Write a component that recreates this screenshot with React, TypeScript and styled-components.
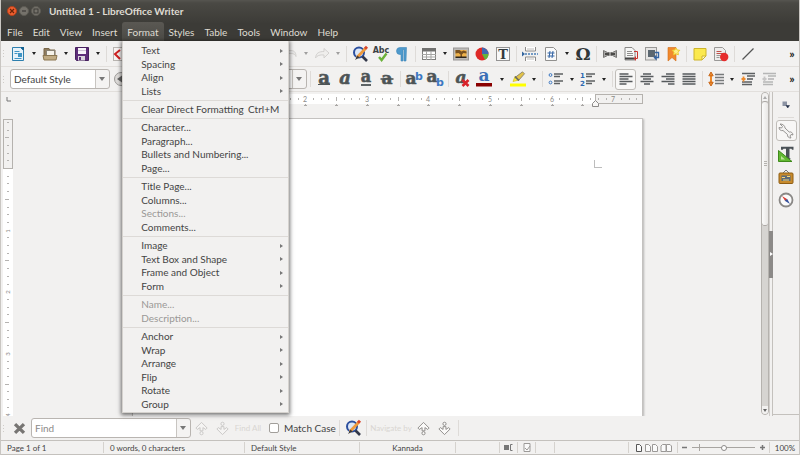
import React from 'react';
import styled, { createGlobalStyle, css } from 'styled-components';
import { Printer, FileSearch, Scissors, Copy, ClipboardPaste, Paintbrush } from 'lucide-react';

const Global = createGlobalStyle`
  * { box-sizing: border-box; }
  html, body { margin: 0; padding: 0; }
  body {
    background: #f2f1f0;
    color: #444;
    font-family: Lato, "Noto Sans", sans-serif;
    font-size: 10px;
    line-height: 14px;
  }
  button, input, select { font: inherit; color: inherit; }
  button { border: 0; padding: 0; margin: 0; background: none; }
  svg { display: block; flex: none; overflow: visible; }
`;

const Window = styled.div`
  display: flex;
  flex-direction: column;
  height: 100vh;
  overflow: hidden;
  background: #f2f1f0;
  border-left: 1px solid #c9c6c2;
  border-right: 1px solid #c9c6c2;
`;

/* ---------- title and menu bar ---------- */

const Chrome = styled.header`
  flex: none;
  margin: 0 -1px;
  color: #dfdbd2;
  background: linear-gradient(#565550 0, #4a4944 3px, #3c3b37 24px);
`;

const TitleBar = styled.div`
  display: flex;
  align-items: center;
  height: 22px;
  padding-left: 7px;
`;

const WindowButtons = styled.div`
  display: flex;
  gap: 2px;
  margin-right: 8px;
`;

const WindowButton = styled.button<{ $close?: boolean }>`
  display: flex;
  align-items: center;
  justify-content: center;
  width: 10px;
  height: 10px;
  border-radius: 50%;
  color: #3c3b37;
  background: ${(p) => (p.$close ? '#ee5f2f' : '#75726b')};
  border: 1px solid ${(p) => (p.$close ? '#b3401b' : '#5d5b54')};
`;

const Title = styled.h1`
  margin: 0;
  font-size: 10px;
  font-weight: 700;
  line-height: 22px;
`;

const MenuBar = styled.nav`
  display: flex;
  height: 19px;
  padding-left: 2px;
`;

const MenuSlot = styled.div`
  position: relative;
`;

const MenuTitle = styled.button<{ $open?: boolean }>`
  height: 19px;
  padding: 0 5px;
  line-height: 18px;
  border-radius: 3px 3px 0 0;
  background: ${(p) => (p.$open ? 'linear-gradient(#5a5853, #4b4a45)' : 'none')};
`;

const Menu = styled.div`
  position: absolute;
  z-index: 10;
  top: 100%;
  left: 0;
  width: 167px;
  padding: 3px 0 1px;
  color: #444;
  background: #f2f1f0;
  border: 1px solid #d5d2ce;
  border-top: 0;
  box-shadow: 0 1px 4px 1px rgba(0, 0, 0, 0.55);
`;

const MenuGroup = styled.div`
  & + & {
    margin-top: 2px;
    padding-top: 2px;
    border-top: 1px solid #dddad7;
  }
`;

const MenuItem = styled.button`
  display: flex;
  align-items: center;
  width: 100%;
  height: 13px;
  padding: 0 5px 0 18px;
  line-height: 13px;
  white-space: nowrap;
  &:nth-child(even) { height: 14px; }
  &:disabled { color: #9a9896; }
`;

const Shortcut = styled.span`
  margin-left: auto;
  padding-right: 4px;
`;

const SubmenuArrow = styled.span`
  width: 0;
  height: 0;
  margin-left: auto;
  border: 2px solid transparent;
  border-left: 3px solid #777;
  border-right: 0;
`;

/* ---------- tool bars ---------- */

const ToolBar = styled.div<{ $tall?: boolean }>`
  display: flex;
  flex: none;
  align-items: center;
  height: ${(p) => (p.$tall ? 26 : 25)}px;
  border-bottom: 1px solid #e2dfdc;
`;

const Grip = styled.span`
  flex: none;
  width: 6px;
  height: 9px;
  background: radial-gradient(circle, #cfccc8 1px, transparent 1px) 1px 0 / 3px 3px repeat-y;
`;

const Tool = styled.button<{ $active?: boolean; $wide?: boolean }>`
  display: flex;
  flex: none;
  align-items: center;
  justify-content: center;
  width: ${(p) => (p.$wide ? 24 : 21)}px;
  height: 21px;
  border-radius: 3px;
  ${(p) => p.$active && css`
    border: 1px solid #c0bdb9;
    background: #f8f7f6;
  `}
  &:disabled { opacity: 0.4; }
`;

const DropTool = styled.button`
  display: flex;
  flex: none;
  align-items: center;
  justify-content: center;
  width: 11px;
  height: 21px;
  &::after {
    content: '';
    border: 2px solid transparent;
    border-top: 3px solid #222;
    border-bottom: 0;
  }
  &:disabled { opacity: 0.4; }
`;

const Divider = styled.span`
  flex: none;
  width: 6px;
  height: 16px;
  background: linear-gradient(#dedbd8, #dedbd8) center / 1px 100% no-repeat;
`;

const More = styled.button`
  width: 14px;
  margin-left: auto;
  font-size: 12px;
  font-weight: 700;
  color: #222;
`;

const Combo = styled.div<{ $width: number }>`
  display: flex;
  flex: none;
  position: relative;
  width: ${(p) => p.$width}px;
  height: 20px;
  border: 1px solid #b9b5b1;
  border-radius: 3px;
  background: linear-gradient(to right, #fff calc(100% - 14px), #c8c5c1 calc(100% - 14px), #c8c5c1 calc(100% - 13px), #f4f3f2 calc(100% - 13px));
  ${Grip} + & { margin-left: 3px; }
  &::after {
    content: '';
    position: absolute;
    top: 7px;
    right: 4px;
    border: 3px solid transparent;
    border-top: 4px solid #777;
    border-bottom: 0;
    pointer-events: none;
  }
`;

const comboField = css`
  width: 100%;
  height: 18px;
  padding: 0 16px 0 3px;
  border: 0;
  outline: 0;
  background: transparent;
`;

const Select = styled.select`
  appearance: none;
  ${comboField}
`;

const TextField = styled.input`
  ${comboField}
  &::placeholder { color: #8d8b89; opacity: 1; }
`;

/* ---------- workspace ---------- */

const Workspace = styled.main`
  display: grid;
  flex: 1;
  min-height: 0;
  grid-template-columns: minmax(0, 1fr) 8px 4px 26px;
  grid-template-rows: minmax(0, 1fr);
`;

const DocumentView = styled.section`
  display: grid;
  min-height: 0;
  grid-template-columns: 12px minmax(0, 1fr);
  grid-template-rows: 26px minmax(0, 1fr);
  overflow: hidden;
`;

const TabCorner = styled.div`
  padding: 5px 0 0 5px;
`;

const RulerRow = styled.div`
  display: flex;
  justify-content: center;
  padding-top: 2px;
  overflow: hidden;
`;

const SideRuler = styled.div`
  padding: 1px 0 0 2px;
  overflow: hidden;
`;

const Canvas = styled.div`
  display: flex;
  justify-content: center;
  overflow: hidden;
`;

const Paper = styled.article`
  display: flex;
  flex: none;
  justify-content: space-between;
  width: 511px;
  padding: 41px 40px 0 41px;
  background: #fff;
  border: 1px solid #c4c2c0;
  border-bottom: 0;
  box-shadow: 1px 1px 2px rgba(0, 0, 0, 0.25);
`;

const MarginCorner = styled.span<{ $side: 'left' | 'right' }>`
  width: 8px;
  height: 8px;
  border-bottom: 1px solid #bdbdbd;
  ${(p) => (p.$side === 'left' ? 'border-right' : 'border-left')}: 1px solid #bdbdbd;
`;

const ScrollBar = styled.div`
  display: flex;
  flex-direction: column;
  margin-bottom: 1px;
  border: 1px solid #b5b2ae;
  border-radius: 4px;
  background: #d6d4d1;
  overflow: hidden;
`;

const ScrollArrow = styled.button<{ $down?: boolean }>`
  display: flex;
  align-items: center;
  justify-content: center;
  height: 8px;
  background: #f2f1f0;
  &::after {
    content: '';
    border: 2px solid transparent;
    ${(p) => (p.$down ? 'border-top: 3px solid #666; border-bottom: 0' : 'border-bottom: 3px solid #aaa; border-top: 0')};
  }
`;

const ScrollTrack = styled.div`
  flex: 1;
`;

const ScrollThumb = styled.div`
  display: flex;
  align-items: center;
  justify-content: center;
  height: 41%;
  border: 1px solid #aaa7a3;
  border-width: 1px 0;
  border-radius: 4px;
  background: linear-gradient(to right, #fbfbfa, #e9e7e5);
  &::after {
    content: '';
    width: 3px;
    height: 5px;
    background: repeating-linear-gradient(#b5b2ae 0 1px, transparent 1px 2px);
  }
`;

const Splitter = styled.div`
  display: flex;
  align-items: center;
  border-left: 1px solid #d0cdca;
  border-right: 1px solid #c4c1bd;
`;

const SplitterHandle = styled.button`
  display: flex;
  flex: none;
  align-items: center;
  width: 4px;
  height: 47px;
  margin-left: -1px;
  background: #8c8a88;
  &::after {
    content: '';
    margin-left: 1px;
    border: 2px solid transparent;
    border-left: 3px solid #fff;
    border-right: 0;
  }
`;

const SideBar = styled.aside`
  display: flex;
  flex-direction: column;
  align-items: center;
  gap: 2px;
  padding-top: 2px;
  margin-bottom: 1px;
  border-bottom: 1px solid #c4c1bd;
`;

const SideDivider = styled.span`
  width: 16px;
  height: 1px;
  background: #dedbd8;
`;

/* ---------- find bar and status bar ---------- */

const FindBar = styled.form`
  display: flex;
  flex: none;
  align-items: center;
  height: 24px;
`;

const FindText = styled.button<{ $width: number }>`
  width: ${(p) => p.$width}px;
  font-size: 8px;
  text-align: center;
  white-space: nowrap;
  &:disabled { color: #d9d6d2; }
`;

const Check = styled.label`
  display: flex;
  align-items: center;
  gap: 5px;
  width: 73px;
  padding-left: 6px;
  white-space: nowrap;
`;

const CheckBox = styled.input`
  appearance: none;
  width: 10px;
  height: 10px;
  margin: 0;
  border: 1px solid #a19e9a;
  border-radius: 2px;
  background: #fff;
`;

const StatusBar = styled.footer`
  display: flex;
  flex: none;
  align-items: center;
  height: 15px;
  margin: 0 -1px;
  padding-left: 1px;
  font-size: 8px;
  line-height: 12px;
  border-top: 1px solid #c4c1bd;
  border-bottom: 1px solid #c4c1bd;
`;

const Cell = styled.div<{ $width?: number; $center?: boolean }>`
  display: flex;
  flex: ${(p) => (p.$width ? `0 0 ${p.$width}px` : '1 1 0')};
  align-items: center;
  justify-content: ${(p) => (p.$center ? 'center' : 'flex-start')};
  gap: 3px;
  height: 11px;
  padding-left: ${(p) => (p.$center ? 0 : 6)}px;
  white-space: nowrap;
  & + & { border-left: 1px solid #d5d2ce; }
`;

const ZoomButton = styled.button`
  width: 9px;
  height: 11px;
  padding: 2px 1px;
`;

const ZoomSlider = styled.input`
  appearance: none;
  width: 63px;
  height: 9px;
  margin: 0;
  background:
    linear-gradient(#a8a5a1, #a8a5a1) 7px center / 1px 7px no-repeat,
    linear-gradient(#a8a5a1, #a8a5a1) center / 100% 1px no-repeat;
  &::-webkit-slider-thumb {
    appearance: none;
    width: 6px;
    height: 6px;
    border: 1px solid #8c8a88;
    border-radius: 50%;
    background: #fff;
  }
`;

/* ---------- drawings ---------- */

const Icon = ({ size = 16, children }: { size?: number; children: React.ReactNode }) => (
  <svg width={size} height={size} viewBox="0 0 16 16" fill="none" aria-hidden="true">{children}</svg>
);

const Letter = ({ x = 8, y = 12, size = 15, fill = '#4d5456', italic = false, serif = true, heavy = false, children }: {
  x?: number; y?: number; size?: number; fill?: string; italic?: boolean; serif?: boolean; heavy?: boolean; children: string;
}) => (
  <text x={x} y={y} fontSize={size} fill={fill} textAnchor="middle" fontWeight="700"
    stroke={heavy ? fill : 'none'} strokeWidth=".6"
    fontStyle={italic ? 'italic' : 'normal'}
    fontFamily={serif ? '"DejaVu Serif", serif' : '"DejaVu Sans", sans-serif'}>{children}</text>
);

const NewDoc = () => (
  <Icon>
    <path d="M2.5 1.5h8l3 3v10h-11z" fill="#e6f1f8" stroke="#2e7fae" />
    <path d="M10 1h4v4z" fill="#14618f" />
    <path d="M4.5 5.5h5M4.5 7.5h3M4.5 12.5h7" stroke="#3e94c4" />
    <rect x="8" y="7" width="4" height="4" fill="#3e94c4" />
  </Icon>
);
const OpenDoc = () => (
  <Icon>
    <path d="M2 2.5h5l1 1.500h5v6H2z" fill="#8f7c5e" stroke="#7a6748" />
    <rect x="4.500" y="4.500" width="8" height="5" fill="#f5f2ea" stroke="#8a8375" />
    <path d="M1 9.500h14l-1 4.500H2z" fill="#c0ab84" stroke="#8b7650" />
  </Icon>
);
const SaveDoc = () => (
  <Icon>
    <path d="M1.500 1.500h13v13h-12l-1-1z" fill="#5d2d79" stroke="#47205f" />
    <rect x="4" y="2" width="8" height="6" fill="#f7f4f9" />
    <path d="M4 4.500h8" stroke="#cfc6d6" />
    <rect x="4" y="10" width="7" height="4.500" fill="#d9d5dc" />
    <rect x="5" y="11" width="2" height="3" fill="#5d2d79" />
  </Icon>
);
const PdfDoc = () => (
  <Icon>
    <rect x="1.500" y="1.500" width="12" height="13" fill="#f6f2f1" stroke="#b9b5b1" />
    <path d="M8 4L3 8l5 5" stroke="#cf2020" strokeWidth="2" />
  </Icon>
);
const Undo = () => <Icon><path d="M1 6l4-3.500v2h4c4 0 5 3 5 6-1-2-2-3-5-3H5v2z" fill="#ddd" stroke="#a5a29e" /></Icon>;
const Redo = () => <Icon><path d="M15 7l-5-4.500v3C5 5.500 2 7 1.500 12 3 9.500 6 8.500 10 9v3z" fill="#eceae8" stroke="#a5a29e" /></Icon>;
const FindReplace = () => (
  <Icon>
    <circle cx="7" cy="6.500" r="5" stroke="#2c4f9e" strokeWidth="2" fill="#dce7f8" />
    <path d="M10.500 10.500l4.500 4.500" stroke="#33384a" strokeWidth="2.600" />
    <path d="M13.500 2.500L5 11.500" stroke="#ef9a3c" strokeWidth="2.800" />
    <path d="M5.500 9.500L3 14l4.500-2.500z" fill="#3c3a38" />
    <path d="M15 .8l-2 2" stroke="#d8452a" strokeWidth="3" />
  </Icon>
);
const Spelling = () => (
  <Icon>
    <Letter size={8} y={6.5} x={8} serif={false} fill="#3c4144">Abc</Letter>
    <path d="M6 11l2.600 3L13.500 7.500" stroke="#6bb23a" strokeWidth="2.400" />
  </Icon>
);
const Pilcrow = () => (
  <Icon>
    <path d="M12.500 1.500H6a3.500 3.500 0 0 0 0 7h1V15h2V3.500h1V15h2z" fill="#4f9acc" stroke="#3f86b8" strokeWidth=".6" />
  </Icon>
);
const TableIcon = () => (
  <Icon>
    <rect x="1.500" y="2.500" width="13" height="11" fill="#fff" stroke="#7f7f7d" />
    <rect x="1" y="2" width="14" height="3.500" fill="#71716f" />
    <path d="M1 8.500h14M1 11h14M5.500 5v9M10 5v9" stroke="#a5a5a3" />
  </Icon>
);
const ImageIcon = () => (
  <Icon>
    <rect x=".5" y="2" width="15" height="12" fill="#bdbbb8" stroke="#9a9896" />
    <rect x="2.500" y="4" width="11" height="8" fill="#eeb24a" />
    <path d="M2.500 4h4l2 1.500 2-1 3 1v2l-3-.5-1.500 1.500v2.500h-1.500V8.500l-2-1.500-3 .5z" fill="#7a5220" />
    <path d="M2.500 10.500h11V12h-11z" fill="#2c251c" />
  </Icon>
);
const ChartIcon = () => (
  <Icon>
    <circle cx="8" cy="8" r="6.500" fill="#de2a27" />
    <path d="M8 8V1.500A6.500 6.500 0 0 1 14.500 8z" fill="#3f68b0" />
    <path d="M8 8h6.500A6.500 6.500 0 0 1 11 13.800z" fill="#63b33c" />
  </Icon>
);
const TextBox = () => (
  <Icon>
    <rect x="1.500" y="1.500" width="13" height="13" stroke="#333" strokeDasharray="1 1" fill="#f8f8f8" />
    <Letter size={13} y={12.5} fill="#333b3f">T</Letter>
  </Icon>
);
const PageBreak = () => (
  <Icon>
    <path d="M3.500 1v4h10V1M3.500 15v-4h10v4" stroke="#8c8a88" fill="#fff" />
    <path d="M5 3h7M5 13h7" stroke="#c0bebc" />
    <path d="M0 5.500v5L3 8z" fill="#33659d" />
    <path d="M3 8h13" stroke="#4a7db5" strokeWidth="1.600" strokeDasharray="2 1" />
  </Icon>
);
const FieldIcon = () => (
  <Icon>
    <path d="M2.500 1.500h8l3 3v10h-11z" fill="#fafafa" stroke="#91908e" />
    <path d="M7 5l-1 7M10 5l-1 7M4.500 7h7M4.500 10h7" stroke="#3465a4" />
  </Icon>
);
const Omega = () => <Icon><Letter size={17} y={14} fill="#2f3638">Ω</Letter></Icon>;
const LinkIcon = () => (
  <Icon>
    <path d="M1.500 4.500v7l4-2h5l4 2v-7l-4 2h-5z" fill="#a9a8a6" stroke="#777674" />
    <path d="M3 8h10" stroke="#4b4a48" strokeWidth="2" />
    <path d="M8 6v4" stroke="#dddbd9" />
  </Icon>
);
const Footnote = () => (
  <Icon>
    <path d="M2 1.500h7l3 3v9.500H2z" fill="#f7f7f6" stroke="#8a8987" />
    <path d="M4 5.500h5M4 7.500h6M4 9.500h6" stroke="#8f8e8c" />
    <path d="M2 12.500h9" stroke="#444" strokeWidth="2" />
    <path d="M11 5.500h3.500v7H12" stroke="#c8352e" />
    <path d="M13 10l-2.500 2.500L13 15z" fill="#c8352e" />
  </Icon>
);
const Endnote = () => (
  <Icon>
    <rect x="1.500" y="1.500" width="11" height="12.500" fill="#e6e5e4" stroke="#9a9997" />
    <rect x="4" y="4" width="7" height="7" fill="#5b6770" />
    <path d="M11 6.500h3.500v5H12" stroke="#3465a4" strokeWidth="1.400" />
    <path d="M12.500 8.500L9.500 11.500l3 3z" fill="#3465a4" />
  </Icon>
);
const Bookmark = () => (
  <Icon>
    <path d="M3 1.500h8V15l-4-3.500L3 15z" fill="#f1892d" stroke="#d06c17" strokeWidth=".6" />
    <path d="M11 2l1.200 2 2.600.3-1.800 1.900.4 2.600L11 7.800l-2.400 1 .4-2.600-1.800-1.900L9.800 4z" fill="#fdf08a" stroke="#eecb2a" />
  </Icon>
);
const Note = () => (
  <Icon>
    <path d="M2 2.500h12V10l-4 4H2z" fill="#fbe94e" stroke="#cdb42a" />
    <path d="M14 10h-4v4z" fill="#fffbd0" stroke="#cdb42a" />
  </Icon>
);
const TrackChanges = () => (
  <Icon>
    <path d="M1.500 1.500h8l3 3v10h-11z" fill="#eeedec" stroke="#9a9997" />
    <path d="M3.500 5.500h5M3.500 7.500h7" stroke="#c0504a" />
    <path d="M3.500 9.500h4M3.500 11.500h3" stroke="#9a9997" />
    <circle cx="11.200" cy="11" r="4.200" fill="#e62c2c" />
  </Icon>
);
const LineIcon = () => <Icon><path d="M2.500 13.500l11-11" stroke="#555" strokeWidth="1.300" /></Icon>;

const Mark = ({ kind }: { kind: 'bold' | 'italic' | 'underline' | 'strike' | 'sup' | 'sub' | 'clear' }) => (
  <Icon>
    {kind === 'bold' && <><Letter size={18} y={13} heavy>a</Letter><path d="M2 13.500h12" stroke="#4d5456" /></>}
    {kind === 'italic' && <Letter size={18} y={13} italic heavy>a</Letter>}
    {kind === 'underline' && <><Letter size={16} y={11} heavy>a</Letter><path d="M3 14h10" stroke="#4d5456" strokeWidth="1.800" /></>}
    {kind === 'strike' && <><Letter size={17} y={13} heavy>a</Letter><path d="M1.500 8h13" stroke="#4d5456" strokeWidth="1.600" /></>}
    {kind === 'sup' && <><Letter size={17} x={5} y={13} heavy>a</Letter><Letter size={11} x={13} y={9} serif={false} fill="#3d78c2">b</Letter></>}
    {kind === 'sub' && <><Letter size={17} x={5} y={11} heavy>a</Letter><Letter size={11} x={13} y={15} serif={false} fill="#3d78c2">b</Letter></>}
    {kind === 'clear' && <><Letter size={17} x={7} y={12} italic heavy>a</Letter><path d="M8.500 9l6 6M14.500 9l-6 6" stroke="#d8232a" strokeWidth="2.600" /></>}
  </Icon>
);
const FontColor = () => (
  <Icon><Letter size={17} y={10} fill="#3b6fb6">a</Letter><rect x="0" y="12" width="16" height="3.500" fill="#8a0000" /></Icon>
);
const Highlight = () => (
  <Icon>
    <rect x="0" y="12.500" width="16" height="3" fill="#ff0" />
    <path d="M3 10.500l2-5 4 3.500z" fill="#fff03a" stroke="#c8b400" strokeWidth=".6" />
    <path d="M5 6.500L12.500.8l2 2L8.500 9.500z" fill="#e3c34a" stroke="#7b7768" strokeWidth=".8" />
    <path d="M5 5.500l4 4" stroke="#6a6a62" strokeWidth="1.600" />
  </Icon>
);
const ListIcon = ({ numbered }: { numbered?: boolean }) => (
  <Icon>
    <path d="M6 3h9M6 5.500h6M6 10h9M6 12.500h6" stroke="#5d6062" strokeWidth="1.600" />
    {numbered
      ? <><Letter size={7} x={2.5} y={7} serif={false} fill="#2d68b0">1</Letter><Letter size={7} x={2.5} y={14.5} serif={false} fill="#2d68b0">2</Letter></>
      : <><circle cx="2.500" cy="4" r="1.400" stroke="#3d78c2" /><circle cx="2.500" cy="11.500" r="1.400" stroke="#3d78c2" /></>}
  </Icon>
);
const AlignIcon = ({ kind }: { kind: 'left' | 'center' | 'right' | 'full' }) => {
  const d = {
    left: 'M1.500 3h9M1.500 5.500h13M1.500 8h9M1.500 10.500h13M1.500 13h7',
    center: 'M4 3h8M1.500 5.500h13M4 8h8M1.500 10.500h13M5 13h6',
    right: 'M6 3h8.500M1.500 5.500h13M6 8h8.500M1.500 10.500h13M8 13h6.500',
    full: 'M1.500 3h13M1.500 5.500h13M1.500 8h13M1.500 10.500h13M1.500 13h13',
  }[kind];
  return <Icon><path d={d} stroke="#565a5c" strokeWidth="1.600" /></Icon>;
};
const SpacingIcon = () => (
  <Icon>
    <path d="M7 3.500h9M7 6.500h9M7 9.500h9M7 12.500h9" stroke="#777a7b" strokeWidth="1.500" />
    <path d="M3 4v8" stroke="#ee8a2c" strokeWidth="2" />
    <path d="M.8 4.800L3 1l2.200 3.800zM.8 11.200L3 15l2.200-3.800z" fill="#ee8a2c" stroke="#c9681a" />
  </Icon>
);
const ParaSpacing = ({ dim }: { dim?: boolean }) => (
  <Icon>
    <path d="M2 2.500h13M7 5h8M2 11h10M2 13.500h10" stroke="#5d6062" strokeWidth="1.600" />
    <path d="M7 8h6" stroke="#5d6062" strokeWidth="1.600" />
    <path d="M1.500 8h4M3.500 5.500v5" stroke={dim ? '#888' : '#ee8a2c'} strokeWidth="1.800" />
  </Icon>
);
const UpdateStyle = () => (
  <Icon><circle cx="8" cy="8" r="6.500" fill="#dddbd9" stroke="#9c9a98" /><path d="M4 8l5-3.500v7z" fill="#666" /></Icon>
);
const CloseX = () => (
  <Icon size={13}><path d="M2.500 2.500l11 11M13.500 2.500l-11 11" stroke="#777573" strokeWidth="4" /></Icon>
);
const JumpArrow = ({ down }: { down?: boolean }) => (
  <Icon size={15}>
    {down
      ? <path d="M8 14.500L14 8.500l-1.500-1.500L9.500 9V6h-3v3l-3-2L2 8.500z" fill="#fbfaf9" stroke="#8c8a88" />
      : <path d="M8 1.500L14 7.500l-1.500 1.500L9.500 7v3.500h-3V7l-3 2L2 7.500z" fill="#fbfaf9" stroke="#8c8a88" />}
    <circle cx="8" cy={down ? 3 : 13} r="1.700" fill="#fbfaf9" stroke="#8c8a88" />
  </Icon>
);
const SidebarMenu = () => (
  <Icon size={8}><rect x="1" y="1" width="9" height="9" fill="#8c93a3" /><path d="M8 9h7l-3.500 5z" fill="#1f2a44" stroke="#1f2a44" /></Icon>
);
const Wrench = () => (
  <Icon>
    <path d="M2 1l2.500 2.500-1 1.500L1 4.500C1 7 3 8 5 7.500l4.500 4c-.3 2 1 3.500 3.500 3.500l-1-2 1-1.500 2 .5c-.3-2.500-2-3.500-3.800-3L7 5C7 3 5 .8 2 1z" fill="#f4f3f2" stroke="#8c8a88" strokeWidth=".9" />
  </Icon>
);
const StylesIcon = () => (
  <Icon>
    <path d="M3 .800h12.500v3h-1.500l-.5-1h-2V12l1.500 1H7l1-1V2.800H5.500l-.7 1H3z" fill="#4a5156" />
    <path d="M.500 4.500V15.500H14z" fill="#62b832" stroke="#3f8a1b" />
    <path d="M3 10v3.500h4z" fill="#bfe39a" />
  </Icon>
);
const GalleryIcon = () => (
  <Icon>
    <path d="M5 4l3-3 3 3" stroke="#777" />
    <rect x="1" y="4" width="14" height="10.500" rx="1" fill="#c78a2c" stroke="#8f5e15" />
    <rect x="3.500" y="6.500" width="9" height="5.500" fill="#5b6a78" />
    <path d="M4 8.500h3M9 7.500h3M5 11h6" stroke="#f6d57b" />
  </Icon>
);
const Compass = () => (
  <Icon>
    <circle cx="8" cy="8" r="6.500" fill="#fbfbfb" stroke="#8a8886" strokeWidth="1.800" />
    <path d="M4 4l5.300 3.200L7.200 9z" fill="#d93a32" />
    <path d="M12 12L6.700 8.800 9.200 7z" fill="#34509c" />
  </Icon>
);

const INCH = 61.6;
const ORIGIN = 50;
const eighths = (count: number) => Array.from({ length: count }, (_, i) => i - 6);

const HorizontalRuler = () => (
  <svg width="511" height="14" viewBox="0 0 511 14" role="img" aria-label="Horizontal ruler">
    <rect x="0" y="0" width="511" height="10" fill="#fff" />
    <rect x=".5" y=".5" width="49" height="9" fill="#f2f1f0" stroke="#b5b2ae" />
    <rect x="463.500" y=".5" width="47" height="9" fill="#f2f1f0" stroke="#b5b2ae" />
    {eighths(67).map((n) => {
      const x = Math.round(ORIGIN + (n * INCH) / 8);
      if (x > 506 || x < 3) return null;
      if (n % 8 === 0) {
        return <text key={n} x={x} y="8" fontSize="7" textAnchor="middle" fill="#8c8a88">{Math.abs(n / 8)}</text>;
      }
      const half = n % 4 === 0;
      return <rect key={n} x={x} y={half ? 3 : 4} width="1" height={half ? 4 : 2} fill="#b5b3b1" />;
    })}
    {Array.from({ length: 13 }, (_, i) => Math.round(ORIGIN + (i + 1) * (INCH / 2))).map((x) => (
      <path key={x} d={`M${x - 1} 11.500h3M${x} 10.500h1`} stroke="#a9a7a5" />
    ))}
    <path d="M460.500 12.500v-3l3-3 3 3v3z" fill="#f7f6f5" stroke="#8c8a88" />
  </svg>
);

const VerticalRuler = () => (
  <svg width="10" height="700" viewBox="0 0 10 700" role="img" aria-label="Vertical ruler">
    <rect width="10" height="700" fill="#fff" />
    <rect x=".5" y=".5" width="9" height="49" fill="#f2f1f0" stroke="#b5b2ae" />
    {eighths(46).map((n) => {
      const y = Math.round(49 + (n * INCH) / 8);
      if (n === 0) return null;
      if (n > 0 && n % 8 === 0) {
        return (
          <text key={n} x="0" y="0" transform={`translate(7 ${y + 1}) rotate(-90)`} fontSize="6" textAnchor="middle" fill="#8c8a88">
            {n / 8}
          </text>
        );
      }
      const half = n % 4 === 0;
      return <rect key={n} x={half ? 2 : 4} y={y} width={half ? 4 : 2} height="1" fill="#b5b3b1" />;
    })}
  </svg>
);

/* ---------- data ---------- */

type Entry = { label: string; sub?: boolean; off?: boolean; keys?: string };
const sub = (label: string): Entry => ({ label, sub: true });
const item = (label: string): Entry => ({ label });
const off = (label: string): Entry => ({ label, off: true });

const FORMAT_MENU: Entry[][] = [
  [sub('Text'), sub('Spacing'), sub('Align'), sub('Lists')],
  [{ label: 'Clear Direct Formatting', keys: 'Ctrl+M' }],
  [item('Character...'), item('Paragraph...'), item('Bullets and Numbering...'), item('Page...')],
  [item('Title Page...'), item('Columns...'), off('Sections...'), item('Comments...')],
  [sub('Image'), sub('Text Box and Shape'), sub('Frame and Object'), sub('Form')],
  [off('Name...'), off('Description...')],
  [sub('Anchor'), sub('Wrap'), sub('Arrange'), sub('Flip'), sub('Rotate'), sub('Group')],
];

const MENUS = ['File', 'Edit', 'View', 'Insert', 'Format', 'Styles', 'Table', 'Tools', 'Window', 'Help'];

type ToolSpec =
  | '|'
  | { name: string; icon: React.ReactNode; drop?: boolean; off?: boolean; active?: boolean; wide?: boolean };

const STANDARD: ToolSpec[] = [
  { name: 'New', icon: <NewDoc />, drop: true },
  { name: 'Open', icon: <OpenDoc />, drop: true },
  { name: 'Save', icon: <SaveDoc />, drop: true },
  '|',
  { name: 'Export as PDF', icon: <PdfDoc /> },
  { name: 'Print', icon: <Printer size={14} /> },
  { name: 'Print Preview', icon: <FileSearch size={14} /> },
  '|',
  { name: 'Cut', icon: <Scissors size={14} /> },
  { name: 'Copy', icon: <Copy size={14} /> },
  { name: 'Paste', icon: <ClipboardPaste size={14} />, drop: true },
  { name: 'Clone', icon: <Paintbrush size={14} /> },
  '|',
  { name: 'Undo', icon: <Undo />, drop: true, off: true },
  { name: 'Redo', icon: <Redo />, drop: true, off: true },
  '|',
  { name: 'Find & Replace', icon: <FindReplace /> },
  { name: 'Spelling', icon: <Spelling /> },
  { name: 'Formatting Marks', icon: <Pilcrow /> },
  '|',
  { name: 'Insert Table', icon: <TableIcon />, drop: true },
  { name: 'Insert Image', icon: <ImageIcon /> },
  { name: 'Insert Chart', icon: <ChartIcon /> },
  { name: 'Insert Text Box', icon: <TextBox /> },
  '|',
  { name: 'Insert Page Break', icon: <PageBreak /> },
  { name: 'Insert Field', icon: <FieldIcon />, drop: true },
  { name: 'Special Character', icon: <Omega /> },
  '|',
  { name: 'Insert Hyperlink', icon: <LinkIcon /> },
  { name: 'Insert Footnote', icon: <Footnote /> },
  { name: 'Insert Endnote', icon: <Endnote /> },
  { name: 'Insert Bookmark', icon: <Bookmark /> },
  '|',
  { name: 'Insert Comment', icon: <Note /> },
  { name: 'Track Changes', icon: <TrackChanges /> },
  '|',
  { name: 'Line', icon: <LineIcon /> },
];

const FORMATTING: ToolSpec[] = [
  '|',
  { name: 'Bold', icon: <Mark kind="bold" /> },
  { name: 'Italic', icon: <Mark kind="italic" /> },
  { name: 'Underline', icon: <Mark kind="underline" /> },
  { name: 'Strikethrough', icon: <Mark kind="strike" /> },
  '|',
  { name: 'Superscript', icon: <Mark kind="sup" /> },
  { name: 'Subscript', icon: <Mark kind="sub" /> },
  '|',
  { name: 'Clear Formatting', icon: <Mark kind="clear" /> },
  { name: 'Font Color', icon: <FontColor />, drop: true, wide: true },
  { name: 'Highlighting', icon: <Highlight />, drop: true },
  '|',
  { name: 'Bullets', icon: <ListIcon />, drop: true },
  { name: 'Numbering', icon: <ListIcon numbered />, drop: true },
  '|',
  { name: 'Align Left', icon: <AlignIcon kind="left" />, active: true },
  { name: 'Center', icon: <AlignIcon kind="center" /> },
  { name: 'Align Right', icon: <AlignIcon kind="right" /> },
  { name: 'Justified', icon: <AlignIcon kind="full" /> },
  '|',
  { name: 'Line Spacing', icon: <SpacingIcon />, drop: true },
  { name: 'Increase Spacing', icon: <ParaSpacing /> },
  { name: 'Decrease Spacing', icon: <ParaSpacing dim />, off: true },
];

const Tools = ({ tools }: { tools: ToolSpec[] }) => (
  <>
    {tools.map((t, i) =>
      t === '|' ? <Divider key={i} /> : (
        <React.Fragment key={t.name}>
          <Tool aria-label={t.name} disabled={t.off} $active={t.active} $wide={t.wide}>{t.icon}</Tool>
          {t.drop && <DropTool aria-label={`${t.name} options`} disabled={t.off} />}
        </React.Fragment>
      ),
    )}
  </>
);

const FormatMenu = () => (
  <Menu role="menu" aria-label="Format">
    {FORMAT_MENU.map((group, i) => (
      <MenuGroup key={i} role="group">
        {group.map((e) => (
          <MenuItem key={e.label} role="menuitem" disabled={e.off}>
            {e.label}
            {e.keys && <Shortcut>{e.keys}</Shortcut>}
            {e.sub && <SubmenuArrow />}
          </MenuItem>
        ))}
      </MenuGroup>
    ))}
  </Menu>
);

export default function App() {
  return (
    <Window>
      <Global />
      <Chrome>
        <TitleBar>
          <WindowButtons>
            <WindowButton $close aria-label="Close">
              <svg width="6" height="6" viewBox="0 0 6 6"><path d="M1 1l4 4M5 1L1 5" stroke="#6b2408" strokeWidth="1.200" /></svg>
            </WindowButton>
            <WindowButton aria-label="Minimize">
              <svg width="6" height="6" viewBox="0 0 6 6"><path d="M1 3h4" stroke="#3c3b37" strokeWidth="1.200" /></svg>
            </WindowButton>
            <WindowButton aria-label="Maximize">
              <svg width="6" height="6" viewBox="0 0 6 6"><rect x="1" y="1" width="4" height="4" fill="none" stroke="#3c3b37" /></svg>
            </WindowButton>
          </WindowButtons>
          <Title>Untitled 1 - LibreOffice Writer</Title>
        </TitleBar>
        <MenuBar>
          {MENUS.map((m) => (
            <MenuSlot key={m}>
              <MenuTitle $open={m === 'Format'} aria-expanded={m === 'Format'}>{m}</MenuTitle>
              {m === 'Format' && <FormatMenu />}
            </MenuSlot>
          ))}
        </MenuBar>
      </Chrome>

      <ToolBar $tall role="toolbar" aria-label="Standard">
        <Grip />
        <Tools tools={STANDARD} />
        <More aria-label="More standard tools">»</More>
      </ToolBar>

      <ToolBar role="toolbar" aria-label="Formatting">
        <Grip />
        <Combo $width={100}>
          <Select aria-label="Paragraph style"><option>Default Style</option></Select>
        </Combo>
        <Tool aria-label="Update style"><UpdateStyle /></Tool>
        <Combo $width={120}>
          <Select aria-label="Font name"><option>Liberation Serif</option></Select>
        </Combo>
        <Divider />
        <Combo $width={50}>
          <Select aria-label="Font size"><option>12</option></Select>
        </Combo>
        <Tools tools={FORMATTING} />
        <More aria-label="More formatting tools">»</More>
      </ToolBar>

      <Workspace>
        <DocumentView>
          <TabCorner>
            <svg width="5" height="5" viewBox="0 0 5 5"><path d="M1 0v4h4" fill="none" stroke="#777" strokeWidth="1" /></svg>
          </TabCorner>
          <RulerRow><HorizontalRuler /></RulerRow>
          <SideRuler><VerticalRuler /></SideRuler>
          <Canvas>
            <Paper>
              <MarginCorner $side="left" />
              <MarginCorner $side="right" />
            </Paper>
          </Canvas>
        </DocumentView>
        <ScrollBar>
          <ScrollArrow aria-label="Scroll up" />
          <ScrollTrack><ScrollThumb /></ScrollTrack>
          <ScrollArrow $down aria-label="Scroll down" />
        </ScrollBar>
        <Splitter><SplitterHandle aria-label="Hide sidebar" /></Splitter>
        <SideBar>
          <Tool aria-label="Sidebar settings"><SidebarMenu /></Tool>
          <SideDivider />
          <Tool $active aria-label="Properties"><Wrench /></Tool>
          <Tool aria-label="Styles"><StylesIcon /></Tool>
          <Tool aria-label="Gallery"><GalleryIcon /></Tool>
          <Tool aria-label="Navigator"><Compass /></Tool>
        </SideBar>
      </Workspace>

      <FindBar onSubmit={(e) => e.preventDefault()}>
        <Grip />
        <Tool type="button" $wide aria-label="Close find bar"><CloseX /></Tool>
        <Combo $width={160}>
          <TextField aria-label="Find" placeholder="Find" />
        </Combo>
        <Tool type="button" disabled aria-label="Find previous"><JumpArrow /></Tool>
        <Tool type="button" disabled aria-label="Find next"><JumpArrow down /></Tool>
        <FindText type="button" disabled $width={30}>Find All</FindText>
        <Check><CheckBox type="checkbox" />Match Case</Check>
        <Divider />
        <Tool type="button" aria-label="Find and replace"><FindReplace /></Tool>
        <Divider />
        <FindText type="button" disabled $width={44}>Navigate by</FindText>
        <Tool type="button" aria-label="Previous"><JumpArrow /></Tool>
        <Tool type="button" aria-label="Next"><JumpArrow down /></Tool>
        <Divider />
      </FindBar>

      <StatusBar>
        <Cell $width={102}>Page 1 of 1</Cell>
        <Cell $width={141}>0 words, 0 characters</Cell>
        <Cell $width={115}>Default Style</Cell>
        <Cell $width={96} $center>Kannada</Cell>
        <Cell $width={44} />
        <Cell $width={18} $center>
          <svg width="9" height="7" viewBox="0 0 9 7"><rect x="0" y="1" width="5" height="5" fill="#777" /><path d="M8.500 .5h-2v6h2" fill="none" stroke="#777" /></svg>
        </Cell>
        <Cell $width={18} $center>
          <svg width="8" height="9" viewBox="0 0 8 9"><path d="M1 .5h6v8H1z" fill="#fafafa" stroke="#9c9a98" /><path d="M2 5l2 2 3-4" fill="none" stroke="#9c9a98" /></svg>
        </Cell>
        <Cell $width={19} />
        <Cell />
        <Cell $width={49} $center>
          <svg width="37" height="9" viewBox="0 0 37 9" fill="#fafafa" strokeWidth="1">
            <path d="M1.500 1.500h3l2 2v5h-5z" stroke="#555" />
            <path d="M10.500 1.500h3l2 2v5h-5zM17.500 1.500h3l2 2v5h-5z" stroke="#9a9896" />
            <path d="M27.500 1.500h3.500v7h-5v-5.500zM31.500 1.500h3.500l1.500 1.500v5.500h-5z" stroke="#9a9896" />
          </svg>
        </Cell>
        <Cell $width={92} $center>
          <ZoomButton aria-label="Zoom out">
            <svg width="7" height="7" viewBox="0 0 7 7"><path d="M1 3.500h5" stroke="#777" strokeWidth="1.500" /></svg>
          </ZoomButton>
          <ZoomSlider type="range" aria-label="Zoom" defaultValue={50} />
          <ZoomButton aria-label="Zoom in">
            <svg width="7" height="7" viewBox="0 0 7 7"><path d="M1 3.500h5M3.500 1v5" stroke="#777" strokeWidth="1.500" /></svg>
          </ZoomButton>
        </Cell>
        <Cell $width={31} $center>100%</Cell>
      </StatusBar>
    </Window>
  );
}
